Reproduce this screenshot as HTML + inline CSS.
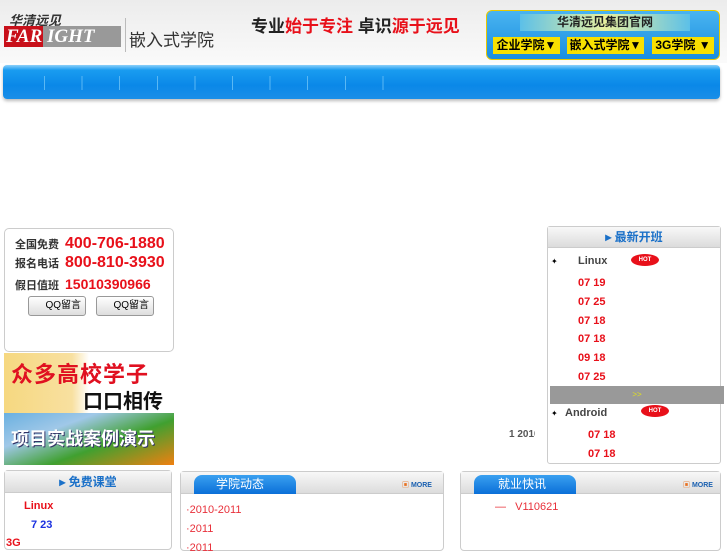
<!DOCTYPE html>
<html><head><meta charset="utf-8"><style>
*{margin:0;padding:0;box-sizing:border-box}
body{width:727px;height:545px;overflow:hidden;background:#fff;font-family:"Liberation Sans","Noto Sans CJK SC",sans-serif;position:relative}
.a{position:absolute}
.r{color:#e8101a;font-weight:bold}
.hd{background:linear-gradient(#ececec,#fafafa);}
.tabh{background:linear-gradient(#f8f8f8,#dcdcdc);border-bottom:1px solid #ccc}
.tab{background:linear-gradient(#3aa0f0,#0a6fd8);color:#fff;border-radius:8px 8px 0 0}
</style></head><body>
<div class="a hd" style="left:0;top:0;width:727px;height:63px"></div>
<div class="a" style="left:9px;top:10px;font-size:13px;font-weight:bold;color:#333;font-style:italic">华清远见</div>
<div class="a" style="left:4px;top:26px;width:39px;height:21px;background:#c8101a;color:#fff;font:italic bold 19px 'Liberation Serif',serif;line-height:21px;padding-left:2px">FAR</div>
<div class="a" style="left:43px;top:26px;width:78px;height:21px;background:#999;color:#fff;font:italic bold 19px 'Liberation Serif',serif;line-height:21px;padding-left:4px">IGHT</div>
<div class="a" style="left:125px;top:18px;width:1px;height:34px;background:#bbb"></div>
<div class="a" style="left:129px;top:26px;font-size:17px;color:#333">嵌入式学院</div>
<div class="a" style="left:251px;top:12px;font-size:17px;font-weight:bold;color:#222">专业<span style="color:#e8101a">始于专注</span> 卓识<span style="color:#e8101a">源于远见</span></div>
<div class="a" style="left:486px;top:10px;width:234px;height:50px;border:1px solid #e8c800;border-radius:6px;background:linear-gradient(#4ab4f0,#1a8ee0)"></div>
<div class="a" style="left:520px;top:14px;width:170px;height:17px;background:linear-gradient(90deg,#5cc0e8,#e8f0a0,#5cc0e8);font-size:12px;font-weight:bold;text-align:center;line-height:17px;color:#222">华清远见集团官网</div>
<div class="a" style="left:493px;top:37px;width:67px;height:17px;background:#f8e000;font-size:12px;font-weight:bold;line-height:17px;text-align:center">企业学院▼</div>
<div class="a" style="left:567px;top:37px;width:77px;height:17px;background:#f8e000;font-size:12px;font-weight:bold;line-height:17px;text-align:center">嵌入式学院▼</div>
<div class="a" style="left:652px;top:37px;width:62px;height:17px;background:#f8e000;font-size:12px;font-weight:bold;line-height:17px;text-align:center">3G学院 ▼</div>
<div class="a" style="left:3px;top:65px;width:717px;height:34px;border-radius:4px;background:linear-gradient(#8cd0fa 0,#1a9cf0 15%,#0a88e8 60%,#1a8ee8 100%);box-shadow:0 2px 3px #bbb"></div>
<div class="a" style="left:44px;top:76px;width:340px;height:14px;background:repeating-linear-gradient(90deg,#5ab8f4 0,#5ab8f4 1px,transparent 1px,transparent 37.6px)"></div>
<div class="a" style="left:4px;top:228px;width:170px;height:124px;border:1px solid #ccc;border-radius:5px"></div>
<div class="a" style="left:15px;top:236px;font-size:11px;line-height:19px;font-weight:bold;color:#333">全国免费<br>报名电话<br><span style="line-height:24px">假日值班</span></div>
<div class="a r" style="left:65px;top:234px;font-size:16px;line-height:19px">400-706-1880<br>800-810-3930<br><span style="font-size:14px;line-height:24px">15010390966</span></div>
<div class="a" style="left:28px;top:296px;width:58px;height:20px;border:1px solid #999;border-radius:3px;background:linear-gradient(#fff,#ddd);font-size:10px;line-height:18px;text-align:right;padding-right:4px">QQ留言</div>
<div class="a" style="left:96px;top:296px;width:58px;height:20px;border:1px solid #999;border-radius:3px;background:linear-gradient(#fff,#ddd);font-size:10px;line-height:18px;text-align:right;padding-right:4px">QQ留言</div>
<div class="a" style="left:4px;top:353px;width:170px;height:60px;background:linear-gradient(90deg,#f6d880 0,#f8e0a0 40%,#fff 50%)"></div>
<div class="a" style="left:11px;top:357px;font-size:22px;font-weight:bold;color:#e01020;letter-spacing:1px">众多高校学子</div>
<div class="a" style="left:83px;top:385px;font-size:20px;font-weight:bold;color:#111">口口相传</div>
<div class="a" style="left:4px;top:413px;width:170px;height:52px;background:linear-gradient(160deg,#6ab0e0 0,#a0c8e8 30%,#40a030 60%,#f08010 100%)"></div>
<div class="a" style="left:11px;top:425px;font-size:18px;font-weight:bold;color:#fff;text-shadow:1px 1px 0 #336">项目实战案例演示</div>
<div class="a" style="left:4px;top:470px;width:168px;height:80px;border:1px solid #ccc;border-radius:4px"></div>
<div class="a tabh" style="left:5px;top:471px;width:166px;height:22px;text-align:center;font-size:12px;font-weight:bold;color:#1a70c8;line-height:22px">▸ 免费课堂</div>
<div class="a r" style="left:24px;top:500px;font-size:11px">Linux</div>
<div class="a" style="left:31px;top:519px;font-size:11px;font-weight:bold;color:#1a30e0">7 23</div>
<div class="a r" style="left:6px;top:537px;font-size:11px">3G</div>
<div class="a" style="left:180px;top:471px;width:264px;height:80px;border:1px solid #ccc;border-radius:4px"></div>
<div class="a tabh" style="left:181px;top:472px;width:262px;height:22px"></div>
<div class="a tab" style="left:194px;top:475px;width:102px;height:19px;font-size:12px;line-height:19px;padding-left:22px">学院动态</div>
<div class="a" style="left:402px;top:480px;font-size:7px;font-weight:bold;color:#1a60b0"><span style="color:#e87020">▣</span> MORE</div>
<div class="a" style="left:186px;top:501px;font-size:11px;line-height:19px;color:#e8303a">·2010-2011<br>·2011<br>·2011</div>
<div class="a" style="left:460px;top:471px;width:261px;height:80px;border:1px solid #ccc;border-radius:4px"></div>
<div class="a tabh" style="left:461px;top:472px;width:259px;height:22px"></div>
<div class="a tab" style="left:474px;top:475px;width:102px;height:19px;font-size:12px;line-height:19px;padding-left:24px">就业快讯</div>
<div class="a" style="left:683px;top:480px;font-size:7px;font-weight:bold;color:#1a60b0"><span style="color:#e87020">▣</span> MORE</div>
<div class="a" style="left:495px;top:501px;font-size:11px;color:#e8303a">—&nbsp;&nbsp;&nbsp;V110621</div>
<div class="a" style="left:547px;top:226px;width:174px;height:238px;border:1px solid #ccc;border-radius:3px"></div>
<div class="a tabh" style="left:548px;top:227px;width:172px;height:21px;text-align:center;font-size:12px;font-weight:bold;color:#1a70c8;line-height:21px">▸ 最新开班</div>
<div class="a" style="left:551px;top:257px;font-size:8px">✦</div>
<div class="a" style="left:578px;top:255px;font-size:11px;font-weight:bold;color:#444">Linux</div>
<div class="a" style="left:631px;top:254px;width:28px;height:12px;background:#e8101a;border-radius:50%;color:#fff;font-size:6px;text-align:center;line-height:12px;font-weight:bold">HOT</div>
<div class="a r" style="left:578px;top:274px;font-size:11px;line-height:18.8px">07 19<br>07 25<br>07 18<br>07 18<br>09 18<br>07 25</div>
<div class="a" style="left:550px;top:386px;width:174px;height:18px;background:#999;color:#e0e020;font-size:8px;text-align:center;line-height:18px">&gt;&gt;</div>
<div class="a" style="left:551px;top:409px;font-size:8px">✦</div>
<div class="a" style="left:565px;top:407px;font-size:11px;font-weight:bold;color:#444">Android</div>
<div class="a" style="left:641px;top:405px;width:28px;height:12px;background:#e8101a;border-radius:50%;color:#fff;font-size:6px;text-align:center;line-height:12px;font-weight:bold">HOT</div>
<div class="a r" style="left:588px;top:426px;font-size:11px;line-height:18.8px">07 18<br>07 18</div>
<div class="a" style="left:509px;top:429px;font-size:10px;font-weight:bold;color:#555;width:26px;overflow:hidden;white-space:nowrap">1 2010</div>
</body></html>
